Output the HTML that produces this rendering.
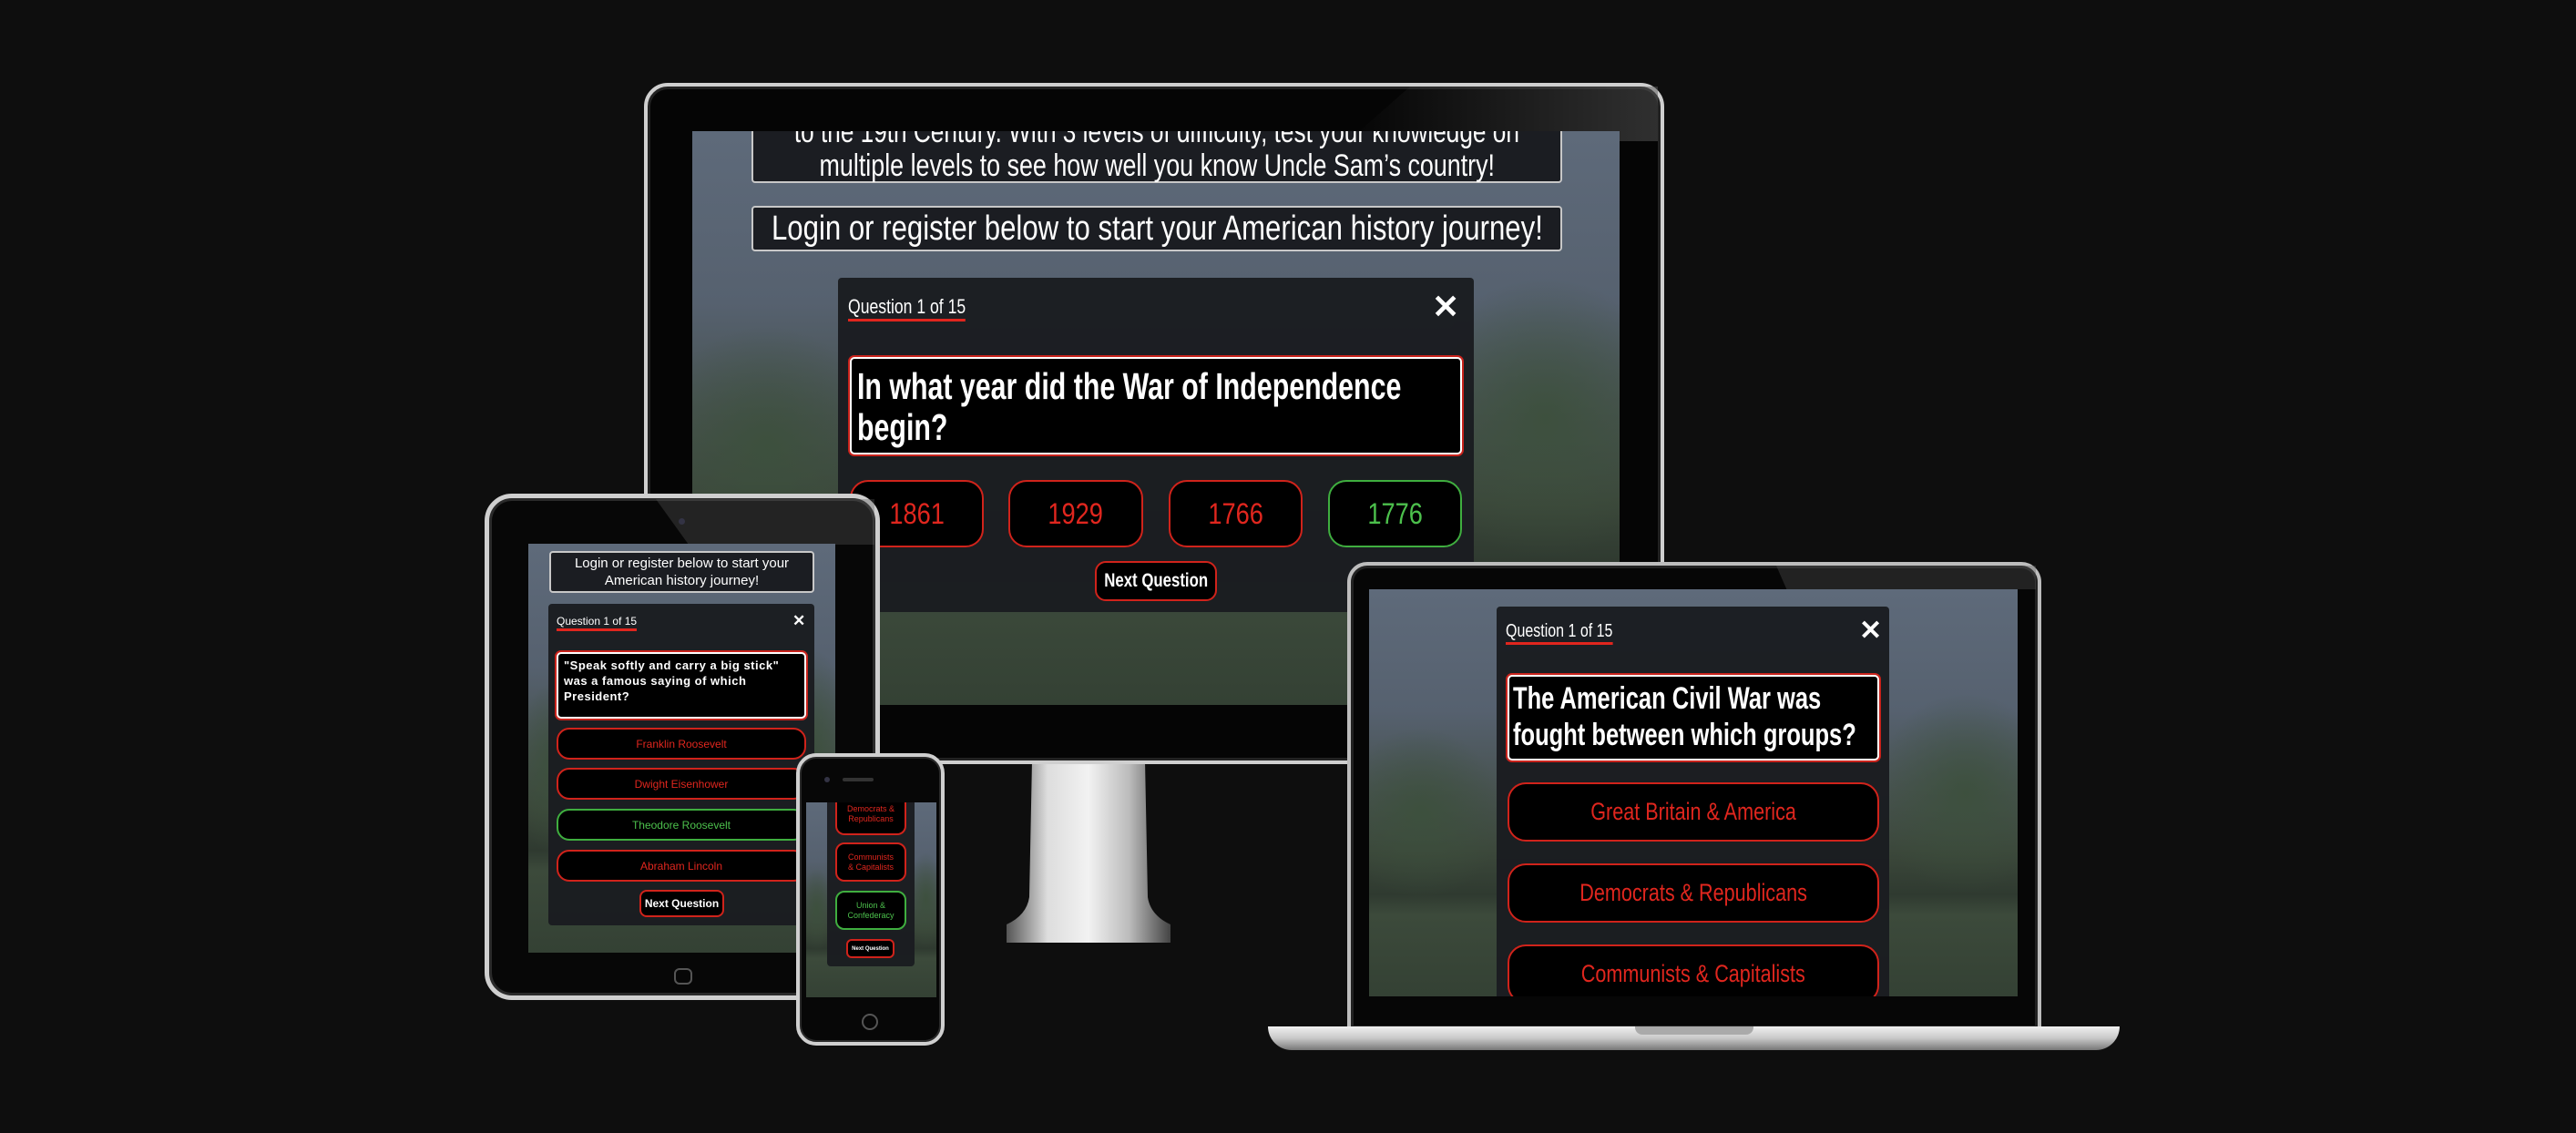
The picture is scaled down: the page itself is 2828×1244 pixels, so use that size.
<!DOCTYPE html>
<html><head><meta charset="utf-8"><style>
*{margin:0;padding:0;box-sizing:border-box}
body{width:2828px;height:1244px;background:#0e0e0e;position:relative;overflow:hidden;font-family:"Liberation Sans",sans-serif}
.a{position:absolute}
.scr{position:absolute;overflow:hidden;background:
radial-gradient(ellipse 18% 30% at 8% 55%,rgba(60,80,60,.9),transparent 70%),
radial-gradient(ellipse 20% 35% at 92% 50%,rgba(60,80,60,.9),transparent 70%),
linear-gradient(#5e6a7a 0%,#56616f 30%,#47524f 50%,#3b473a 65%,#2f3a30 75%,#3c4a3b 80%,#344134 100%)}
.modal{position:absolute;background:rgba(26,28,32,.96);border-radius:4px}
.c{display:inline-block;white-space:nowrap;transform:scaleX(.74);transform-origin:center;flex:none}
.cl{display:inline-block;white-space:nowrap;transform:scaleX(.78);transform-origin:left}
.lbl{position:absolute;color:#fff;line-height:1;white-space:nowrap}
.lbl span{border-bottom:3px solid #e0261e;padding-bottom:2px}
.qb{position:absolute;background:#000;border:2px solid #fff;box-shadow:0 0 0 2px #c9231c;border-radius:5px;color:#fff;font-weight:bold;white-space:nowrap}
.btn{position:absolute;background:#000;border:2px solid #d0231b;color:#e0261e;display:flex;align-items:center;justify-content:center;text-align:center;white-space:nowrap}
.g{border-color:#3fae3f;color:#4cc04c}
.box{position:absolute;background:#1b1d22;border:2px solid #c8c8c8;border-radius:4px;color:#fff;text-align:center;white-space:nowrap;display:flex;flex-direction:column;align-items:center;justify-content:center}
.x{position:absolute;color:#fff;font-weight:bold;line-height:1}
</style></head><body>

<!-- MONITOR -->
<svg class="a" style="left:1095px;top:835px" width="200" height="210">
<defs><linearGradient id="st" x1="0" x2="1"><stop offset="0" stop-color="#555"/><stop offset=".25" stop-color="#ddd"/><stop offset=".5" stop-color="#f2f2f2"/><stop offset=".75" stop-color="#bbb"/><stop offset="1" stop-color="#444"/></linearGradient></defs>
<path d="M38 0 H162 L165 150 Q168 170 190 180 L190 200 H10 L10 180 Q32 170 35 150 Z" fill="url(#st)"/>
</svg>
<div class="a" style="left:707px;top:91px;width:1120px;height:748px;border-radius:26px;background:#050505;border:4px solid #cfcfcf;box-shadow:inset 0 0 0 3px #222"></div>
<div class="a" style="left:1480px;top:95px;width:340px;height:60px;background:linear-gradient(90deg,rgba(80,80,80,0),rgba(90,90,90,.5));clip-path:polygon(20% 0,100% 0,100% 100%,0 100%)"></div>
<div class="scr" style="left:760px;top:144px;width:1018px;height:630px">
  <div class="box" style="left:65px;top:-20px;width:890px;height:77px;font-size:34px;line-height:37px;padding-top:2px"><span class="c" style="transform:scaleX(.77)">to the 19th Century. With 3 levels of difficulty, test your knowledge on</span><span class="c" style="transform:scaleX(.79)">multiple levels to see how well you know Uncle Sam’s country!</span></div>
  <div class="box" style="left:65px;top:82px;width:890px;height:50px;font-size:38px;line-height:46px"><span class="c" style="transform:scaleX(.82)">Login or register below to start your American history journey!</span></div>
  <div class="modal" style="left:160px;top:161px;width:698px;height:367px">
    <div class="lbl" style="left:11px;top:21px;font-size:22px"><span class="cl" style="transform:scaleX(.8)">Question 1 of 15</span></div>
    <div class="x" style="left:652px;top:14px;font-size:36px">✕</div>
    <div class="qb" style="left:13px;top:87px;width:672px;height:107px;font-size:41px;line-height:45px;padding:8px 6px"><span class="cl" style="transform:scaleX(.74)">In what year did the War of Independence</span><br><span class="cl" style="transform:scaleX(.74)">begin?</span></div>
    <div class="btn" style="left:13px;top:222px;width:147px;height:74px;border-radius:20px;font-size:32px"><span class="c" style="transform:scaleX(.85)">1861</span></div>
    <div class="btn" style="left:187px;top:222px;width:148px;height:74px;border-radius:20px;font-size:32px"><span class="c" style="transform:scaleX(.85)">1929</span></div>
    <div class="btn" style="left:363px;top:222px;width:147px;height:74px;border-radius:20px;font-size:32px"><span class="c" style="transform:scaleX(.85)">1766</span></div>
    <div class="btn g" style="left:538px;top:222px;width:147px;height:74px;border-radius:20px;font-size:32px"><span class="c" style="transform:scaleX(.85)">1776</span></div>
    <div class="btn" style="left:282px;top:311px;width:134px;height:44px;border-radius:12px;color:#fff;font-weight:bold;font-size:21px"><span class="c" style="transform:scaleX(.8)">Next Question</span></div>
  </div>
</div>

<!-- TABLET -->
<div class="a" style="left:532px;top:542px;width:434px;height:556px;border-radius:30px;background:#070707;border:5px solid #cfcfcf;box-shadow:inset 0 0 0 3px #2a2a2a"></div>
<div class="a" style="left:720px;top:548px;width:240px;height:50px;background:rgba(90,90,90,.35);clip-path:polygon(0 0,100% 0,100% 100%,15% 100%)"></div>
<div class="a" style="left:745px;top:569px;width:7px;height:7px;border-radius:50%;background:#334"></div>
<div class="a" style="left:740px;top:1063px;width:20px;height:18px;border-radius:6px;border:2px solid #555"></div>
<div class="scr" style="left:580px;top:597px;width:337px;height:449px">
  <div class="box" style="left:23px;top:8px;width:291px;height:46px;font-size:15px;line-height:19px"><span>Login or register below to start your</span><span>American history journey!</span></div>
  <div class="modal" style="left:22px;top:66px;width:292px;height:353px">
    <div class="lbl" style="left:9px;top:13px;font-size:12px"><span style="padding-bottom:1px">Question 1 of 15</span></div>
    <div class="x" style="left:268px;top:10px;font-size:17px">✕</div>
    <div class="qb" style="left:9px;top:53px;width:274px;height:73px;font-size:13px;line-height:17px;padding:4px 6px;letter-spacing:.5px;white-space:normal">"Speak softly and carry a big stick" was a famous saying of which President?</div>
    <div class="btn" style="left:9px;top:136px;width:274px;height:35px;border-radius:14px;font-size:12px">Franklin Roosevelt</div>
    <div class="btn" style="left:9px;top:180px;width:274px;height:35px;border-radius:14px;font-size:12px">Dwight Eisenhower</div>
    <div class="btn g" style="left:9px;top:225px;width:274px;height:35px;border-radius:14px;font-size:12px">Theodore Roosevelt</div>
    <div class="btn" style="left:9px;top:270px;width:274px;height:35px;border-radius:14px;font-size:12px">Abraham Lincoln</div>
    <div class="btn" style="left:100px;top:314px;width:93px;height:30px;border-radius:8px;color:#fff;font-weight:bold;font-size:12px">Next Question</div>
  </div>
</div>

<!-- PHONE -->
<div class="a" style="left:874px;top:827px;width:163px;height:321px;border-radius:22px;background:#070707;border:4px solid #cfcfcf;box-shadow:inset 0 0 0 2px #2a2a2a"></div>
<div class="a" style="left:925px;top:854px;width:34px;height:4px;border-radius:2px;background:#333"></div>
<div class="a" style="left:905px;top:853px;width:6px;height:6px;border-radius:50%;background:#334"></div>
<div class="a" style="left:946px;top:1113px;width:18px;height:18px;border-radius:50%;border:2px solid #555"></div>
<div class="scr" style="left:885px;top:881px;width:143px;height:214px">
  <div class="modal" style="left:23px;top:-10px;width:96px;height:190px">
    <div class="btn" style="left:9px;top:2px;width:78px;height:44px;font-size:9px;line-height:11px;border-top:none;border-radius:0 0 10px 10px">Democrats &amp;<br>Republicans</div>
    <div class="btn" style="left:9px;top:54px;width:78px;height:43px;border-radius:10px;font-size:9px;line-height:11px">Communists<br>&amp; Capitalists</div>
    <div class="btn g" style="left:9px;top:107px;width:78px;height:43px;border-radius:10px;font-size:9px;line-height:11px">Union &amp;<br>Confederacy</div>
    <div class="btn" style="left:21px;top:160px;width:53px;height:21px;border-radius:6px;color:#fff;font-weight:bold;font-size:6px">Next Question</div>
  </div>
</div>

<!-- LAPTOP -->
<div class="a" style="left:1479px;top:617px;width:762px;height:512px;border-radius:22px 22px 0 0;background:#060606;border:4px solid #bdbdbd;border-bottom:none;box-shadow:inset 0 0 0 3px #222"></div>
<div class="a" style="left:1950px;top:621px;width:285px;height:26px;background:rgba(90,90,90,.35);clip-path:polygon(0 0,100% 0,100% 100%,4% 100%)"></div>
<div class="scr" style="left:1503px;top:647px;width:712px;height:447px">
  <div class="modal" style="left:140px;top:19px;width:431px;height:440px">
    <div class="lbl" style="left:10px;top:17px;font-size:20px"><span class="cl" style="transform:scaleX(.8)">Question 1 of 15</span></div>
    <div class="x" style="left:398px;top:12px;font-size:30px">✕</div>
    <div class="qb" style="left:12px;top:75px;width:408px;height:94px;font-size:34px;line-height:40px;padding:4px 4px"><span class="cl" style="transform:scaleX(.75)">The American Civil War was</span><br><span class="cl" style="transform:scaleX(.75)">fought between which groups?</span></div>
    <div class="btn" style="left:12px;top:193px;width:408px;height:65px;border-radius:20px;font-size:27px"><span class="c" style="transform:scaleX(.8)">Great Britain &amp; America</span></div>
    <div class="btn" style="left:12px;top:282px;width:408px;height:65px;border-radius:20px;font-size:27px"><span class="c" style="transform:scaleX(.8)">Democrats &amp; Republicans</span></div>
    <div class="btn" style="left:12px;top:371px;width:408px;height:65px;border-radius:20px;font-size:27px"><span class="c" style="transform:scaleX(.8)">Communists &amp; Capitalists</span></div>
  </div>
</div>
<div class="a" style="left:1392px;top:1127px;width:935px;height:26px;border-radius:0 0 30px 30px;background:linear-gradient(#f0f0f0,#c8c8c8 50%,#777)"></div>
<div class="a" style="left:1795px;top:1127px;width:130px;height:9px;border-radius:0 0 8px 8px;background:#aaa"></div>
</body></html>
